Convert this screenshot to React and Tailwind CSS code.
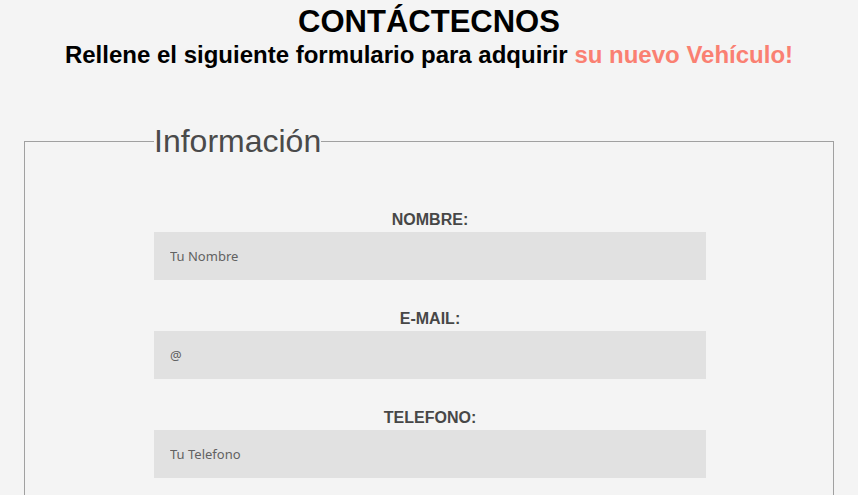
import React from 'react';

const fields = [
  { label: 'NOMBRE:', placeholder: 'Tu Nombre', type: 'text' },
  { label: 'E-MAIL:', placeholder: '@', type: 'email' },
  { label: 'TELEFONO:', placeholder: 'Tu Telefono', type: 'tel' },
];

export default function App() {
  return (
    <div className="min-h-screen bg-[#f4f4f4] font-['Liberation_Sans',Arial,sans-serif]">
      {/* Header */}
      <header className="text-center pt-[4px]">
        <h1 className="text-[31px] font-bold text-black leading-[36px]">CONTÁCTECNOS</h1>
        <h2 className="text-[24px] font-bold text-black leading-[28px] mt-[1px]">
          Rellene el siguiente formulario para adquirir{' '}
          <span className="text-[#fa8072]">su nuevo Vehículo!</span>
        </h2>
      </header>

      {/* Form */}
      <form className="px-[24px] mt-[54px]">
        <fieldset className="border border-[#a0a0a0] pl-[129px] pr-[127px] pb-10">
          <legend className="text-[32px] text-[#4a4a4a] leading-[37px] font-normal">Información</legend>

          <div className="pt-[51px] flex flex-col gap-[30px]">
            {fields.map((f) => (
              <div key={f.label} className="flex flex-col">
                <label className="text-center text-[16px] font-bold text-[#474747] leading-[17px] mb-[4px]">
                  {f.label}
                </label>
                <input
                  type={f.type}
                  placeholder={f.placeholder}
                  className="h-[48px] w-full bg-[#e1e1e1] px-[16px] text-[13px] font-['Noto_Sans',sans-serif] placeholder:text-[#626262] outline-none"
                />
              </div>
            ))}
          </div>
        </fieldset>
      </form>
    </div>
  );
}
